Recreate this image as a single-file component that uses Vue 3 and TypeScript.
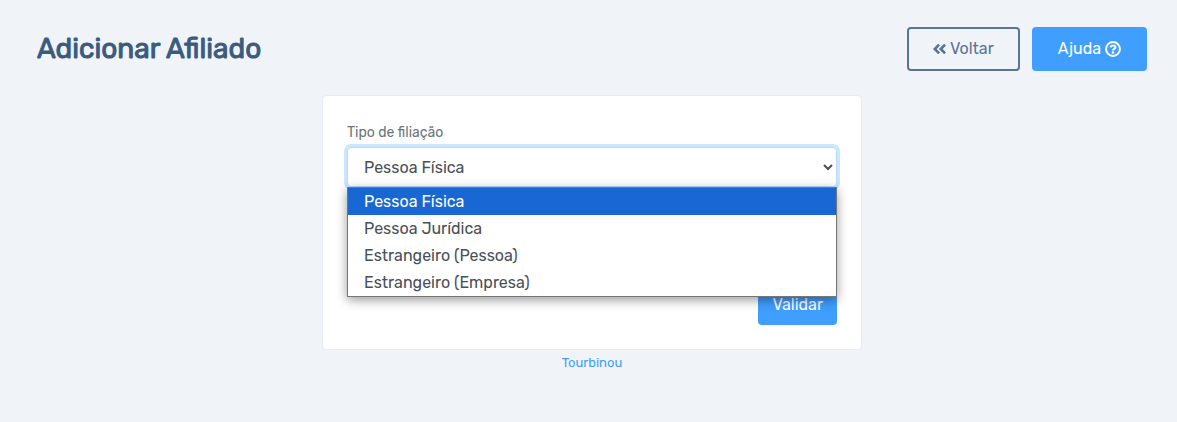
<script setup lang="ts">
import { ref } from 'vue'

const types: string[] = [
  'Pessoa Física',
  'Pessoa Jurídica',
  'Estrangeiro (Pessoa)',
  'Estrangeiro (Empresa)',
]
const selected = ref<string>(types[0])
const open = ref<boolean>(true)

function choose(type: string): void {
  selected.value = type
  open.value = false
}

function toggle(): void {
  open.value = !open.value
}
</script>

<template>
  <div class="page">
    <header class="header">
      <h1 class="title">Adicionar Afiliado</h1>
      <div class="actions">
        <button type="button" class="btn btn-outline">
          <svg class="icon-back" viewBox="0 0 13 12" aria-hidden="true">
            <path d="M6.1 1.6 1.8 6l4.3 4.4M12.1 1.6 7.8 6l4.3 4.4" />
          </svg>
          <span>Voltar</span>
        </button>
        <button type="button" class="btn">
          <span>Ajuda</span>
          <svg class="icon-help" viewBox="0 0 512 512" aria-hidden="true">
            <circle cx="256" cy="256" r="222" />
            <path d="M170 205c16-40 45-62 86-62 44 0 78 26 78 62 0 54-78 46-78 100" />
            <circle class="dot" cx="256" cy="366" r="42" />
          </svg>
        </button>
      </div>
    </header>

    <main class="content">
      <form class="card" @submit.prevent>
        <label class="label" for="tipo">Tipo de filiação</label>
        <div class="field">
          <select id="tipo" v-model="selected" class="select" @mousedown.prevent="toggle">
            <option v-for="type in types" :key="type" :value="type">{{ type }}</option>
          </select>
          <ul v-if="open" class="menu" role="listbox" aria-label="Tipo de filiação">
            <li
              v-for="type in types"
              :key="type"
              class="item"
              :class="{ active: type === selected }"
              role="option"
              :aria-selected="type === selected"
              @click="choose(type)"
            >{{ type }}</li>
          </ul>
        </div>
        <div class="footer">
          <button type="submit" class="btn submit">Validar</button>
        </div>
      </form>
      <a class="credit" href="#">Tourbinou</a>
    </main>
  </div>
</template>

<style>
body {
  margin: 0;
  background: #f0f4f9;
}
</style>

<style scoped>
.page,
.page * {
  box-sizing: border-box;
}
.page {
  min-height: 100vh;
  padding: 27px 30px 24px 37px;
  color: #495057;
  font-family: Rubik, Roboto, "Liberation Sans", sans-serif;
  font-size: 16px;
  line-height: 24px;
}
.header {
  display: flex;
  align-items: center;
  justify-content: space-between;
  margin-bottom: 24px;
}
.title {
  margin: 0;
  color: #3b5b7e;
  font-size: 28px;
  font-weight: 400;
  line-height: 36px;
  -webkit-text-stroke: 1px currentColor;
}
.actions {
  display: flex;
  gap: 12px;
}
.btn {
  display: flex;
  align-items: center;
  justify-content: center;
  gap: 4px;
  height: 44px;
  padding: 0 24px;
  border: 2px solid #409eff;
  border-radius: 4px;
  background: #409eff;
  color: #fff;
  font: inherit;
  cursor: pointer;
}
.btn-outline {
  border-color: #587596;
  background: transparent;
  color: #587596;
}
.icon-back {
  width: 13px;
  height: 12px;
  fill: none;
  stroke: currentColor;
  stroke-width: 2.7;
}
.icon-help {
  width: 16px;
  height: 16px;
  fill: none;
  stroke: currentColor;
  stroke-width: 64;
}
.icon-help .dot {
  fill: currentColor;
  stroke: none;
}
.content {
  display: flex;
  flex-direction: column;
  align-items: center;
}
.card {
  width: 100%;
  max-width: 540px;
  padding: 24px;
  border: 1px solid #e9ecef;
  border-radius: 4px;
  background: #fff;
}
.label {
  display: block;
  padding-top: 1px;
  margin-bottom: 2px;
  color: #6c757d;
  font-size: 14px;
}
.field {
  position: relative;
}
.select {
  display: block;
  width: 100%;
  height: 40px;
  padding: 0 0 0 12px;
  border: 1px solid #b8dbff;
  border-radius: 4px;
  outline: none;
  background-color: #fff;
  box-shadow: 0 0 0 3px #cce6ff;
  color: #495057;
  font: inherit;
}
.menu {
  position: absolute;
  z-index: 1;
  top: 100%;
  right: 0;
  left: 0;
  margin: 0;
  padding: 0;
  border: 1px solid #767676;
  background: #fff;
  box-shadow: 0 3px 10px rgba(0, 0, 0, 0.4);
  list-style: none;
}
.item {
  padding: 0 16px;
  line-height: 27px;
  cursor: default;
}
.item.active {
  background: #1967d2;
  color: #fff;
}
.footer {
  display: flex;
  justify-content: flex-end;
  margin-top: 98px;
}
.submit {
  height: 40px;
  padding: 0 12px;
}
.credit {
  margin-top: 1px;
  color: #409eff;
  font-size: 13px;
  text-decoration: none;
}
</style>
